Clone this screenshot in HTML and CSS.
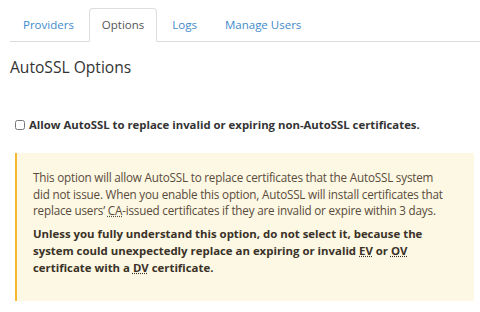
FILE: index.html
```html
<!DOCTYPE html>
<html lang="en">
<head>
    <meta charset="UTF-8">
    <title>AutoSSL Options</title>
    <link rel="stylesheet" href="styles.css">
</head>
<body>
    <!-- Tabs -->
    <ul class="nav-tabs">
        <li><a href="#">Providers</a></li>
        <li class="active"><a href="#">Options</a></li>
        <li><a href="#">Logs</a></li>
        <li><a href="#">Manage Users</a></li>
    </ul>

    <h2 class="page-title">AutoSSL Options</h2>

    <!-- Option -->
    <label class="option">
        <input type="checkbox" class="option-check">
        <span>Allow AutoSSL to replace invalid or expiring non-AutoSSL certificates.</span>
    </label>

    <div class="callout-warning">
        <p>This option will allow AutoSSL to replace certificates that the AutoSSL system did not issue. When you enable this option, AutoSSL will install certificates that replace users’ <abbr title="Certificate Authority">CA</abbr>-issued certificates if they are invalid or expire within 3 days.</p>
        <p class="strong">Unless you fully understand this option, do not select it, because the system could unexpectedly replace an expiring or invalid <abbr title="Extended Validation">EV</abbr> or <abbr title="Organization Validation">OV</abbr> certificate with a <abbr title="Domain Validation">DV</abbr> certificate.</p>
    </div>
</body>
</html>
```

FILE: styles.css
```css
/* Base */
body {
    margin: 0;
    padding: 0 0 0 10px;
    font-family: "Open Sans", Arial, sans-serif;
    font-size: 12px;
    color: #333;
    background: #fff;
}

/* Tabs */
.nav-tabs {
    list-style: none;
    margin: 0;
    padding: 8px 0 0 0;
    display: flex;
    border-bottom: 1px solid #ddd;
}

.nav-tabs li {
    margin-right: 2px;
    margin-bottom: -1px;
}

.nav-tabs a {
    display: block;
    padding: 8px 12px;
    font-size: 11.5px;
    color: #428bca;
    text-decoration: none;
    border: 1px solid transparent;
    border-radius: 4px 4px 0 0;
    line-height: 16px;
}

.nav-tabs .active a {
    color: #555;
    background: #fff;
    border-color: #ddd #ddd transparent;
}

/* Heading */
.page-title {
    font-size: 15.6px;
    font-weight: normal;
    margin: 14px 0 0;
    line-height: 22px;
}

/* Checkbox option */
.option {
    display: flex;
    align-items: center;
    margin: 39px 0 0 5px;
    font-size: 11.35px;
    font-weight: bold;
}

.option-check {
    width: 10px;
    height: 10px;
    margin: 0 4px 0 0;
}

/* Warning callout */
.callout-warning {
    margin: 21px 6px 0 5px;
    padding: 16px 22px 18px 16px;
    background: #fcf8e3;
    border-left: 2px solid #f5b731;
    color: #5a4b3c;
    font-size: 11.7px;
    letter-spacing: -0.2px;
    line-height: 16.7px;
}

.callout-warning p {
    margin: 0 0 7px;
}

.callout-warning .strong {
    font-size: 11.4px;
    letter-spacing: 0;
    font-weight: bold;
    color: #3a3128;
}

abbr {
    text-decoration: underline dotted;
}
```
